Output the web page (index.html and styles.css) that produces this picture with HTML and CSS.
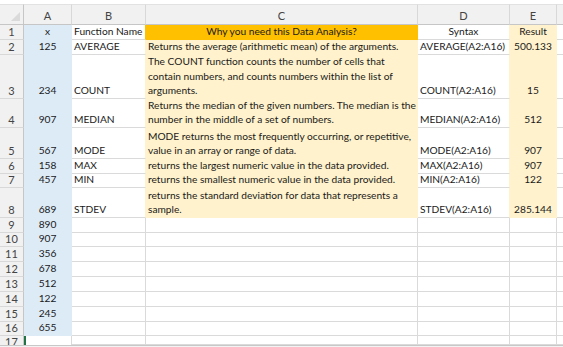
FILE: index.html
```html
<!DOCTYPE html>
<html>
<head>
<meta charset="utf-8">
<link rel="stylesheet" href="styles.css">
</head>
<body>
<div class="sheet">
  <!-- column header row -->
  <div class="ch corner"><span class="tri"></span></div>
  <div class="ch">A</div>
  <div class="ch">B</div>
  <div class="ch">C</div>
  <div class="ch">D</div>
  <div class="ch">E</div>
  <div class="ch last"></div>

  <!-- row 1 -->
  <div class="rh">1</div>
  <div class="c a ctr">x</div>
  <div class="c b nb-or">Function Name</div>
  <div class="c or ctr">Why you need this Data Analysis?</div>
  <div class="c d ctr nb-y">Syntax</div>
  <div class="c y ctr">Result</div>
  <div class="c f"></div>

  <!-- row 2 -->
  <div class="rh">2</div>
  <div class="c a ctr">125</div>
  <div class="c b nb-y">AVERAGE</div>
  <div class="c y">Returns the average (arithmetic mean) of the arguments.</div>
  <div class="c d nb-y">AVERAGE(A2:A16)</div>
  <div class="c y ctr">500.133</div>
  <div class="c f"></div>

  <!-- row 3 -->
  <div class="rh">3</div>
  <div class="c a ctr">234</div>
  <div class="c b nb-y">COUNT</div>
  <div class="c y">The COUNT function counts the number of cells that<br>contain numbers, and counts numbers within the list of<br>arguments.</div>
  <div class="c d nb-y">COUNT(A2:A16)</div>
  <div class="c y ctr">15</div>
  <div class="c f"></div>

  <!-- row 4 -->
  <div class="rh">4</div>
  <div class="c a ctr">907</div>
  <div class="c b nb-y">MEDIAN</div>
  <div class="c y">Returns the median of the given numbers. The median is the<br>number in the middle of a set of numbers.</div>
  <div class="c d nb-y">MEDIAN(A2:A16)</div>
  <div class="c y ctr">512</div>
  <div class="c f"></div>

  <!-- row 5 -->
  <div class="rh">5</div>
  <div class="c a ctr">567</div>
  <div class="c b nb-y">MODE</div>
  <div class="c y">MODE returns the most frequently occurring, or repetitive,<br>value in an array or range of data.</div>
  <div class="c d nb-y">MODE(A2:A16)</div>
  <div class="c y ctr">907</div>
  <div class="c f"></div>

  <!-- row 6 -->
  <div class="rh">6</div>
  <div class="c a ctr">158</div>
  <div class="c b nb-y">MAX</div>
  <div class="c y">returns the largest numeric value in the data provided.</div>
  <div class="c d nb-y">MAX(A2:A16)</div>
  <div class="c y ctr">907</div>
  <div class="c f"></div>

  <!-- row 7 -->
  <div class="rh">7</div>
  <div class="c a ctr">457</div>
  <div class="c b nb-y">MIN</div>
  <div class="c y">returns the smallest numeric value in the data provided.</div>
  <div class="c d nb-y">MIN(A2:A16)</div>
  <div class="c y ctr">122</div>
  <div class="c f"></div>

  <!-- row 8 -->
  <div class="rh">8</div>
  <div class="c a ctr">689</div>
  <div class="c b nb-y">STDEV</div>
  <div class="c y">returns the standard deviation for data that represents a<br>sample.</div>
  <div class="c d nb-y">STDEV(A2:A16)</div>
  <div class="c y ctr">285.144</div>
  <div class="c f"></div>

  <div class="rh">9</div><div class="c a ctr">890</div><div class="c"></div><div class="c"></div><div class="c"></div><div class="c"></div><div class="c f"></div>
  <div class="rh">10</div><div class="c a ctr">907</div><div class="c"></div><div class="c"></div><div class="c"></div><div class="c"></div><div class="c f"></div>
  <div class="rh">11</div><div class="c a ctr">356</div><div class="c"></div><div class="c"></div><div class="c"></div><div class="c"></div><div class="c f"></div>
  <div class="rh">12</div><div class="c a ctr">678</div><div class="c"></div><div class="c"></div><div class="c"></div><div class="c"></div><div class="c f"></div>
  <div class="rh">13</div><div class="c a ctr">512</div><div class="c"></div><div class="c"></div><div class="c"></div><div class="c"></div><div class="c f"></div>
  <div class="rh">14</div><div class="c a ctr">122</div><div class="c"></div><div class="c"></div><div class="c"></div><div class="c"></div><div class="c f"></div>
  <div class="rh">15</div><div class="c a ctr">245</div><div class="c"></div><div class="c"></div><div class="c"></div><div class="c"></div><div class="c f"></div>
  <div class="rh">16</div><div class="c a ctr">655</div><div class="c"></div><div class="c"></div><div class="c"></div><div class="c"></div><div class="c f"></div>
  <div class="rh r17"><span class="r17n">17</span></div><div class="c sel"></div><div class="c"></div><div class="c"></div><div class="c"></div><div class="c"></div><div class="c f"></div>
</div>
<div class="hbar"></div>
</body>
</html>
```
FILE: styles.css
```css
html, body {
  margin: 0;
  padding: 0;
  background: #ffffff;
  overflow: hidden;
}
body {
  padding-top: 4px;
  height: 343px;
  font-family: Lato, "Liberation Sans", sans-serif;
  font-size: 10.2px;
  color: #1a1a1a;
}
.sheet {
  display: grid;
  grid-template-columns: 24px 48px 74px 272px 92px 47px 6px;
  grid-template-rows: 21px 15px 15px 44px 29px 31px 15px 14px 30px 15px 14px 15px 15px 15px 15px 15px 14px 9px;
  height: 341px;
  overflow: hidden;
}
.ch {
  background: #f1f1f1;
  border-right: 1px solid #d8d8d8;
  border-bottom: 1px solid #c6c6c6;
  border-top: 1px solid #e2e2e2;
  box-sizing: border-box;
  color: #444444;
  font-size: 11px;
  display: flex;
  align-items: center;
  justify-content: center;
  padding-top: 1px;
}
.ch.corner {
  position: relative;
  border-right-color: #c6c6c6;
}
.ch.last { border-right: none; }
.tri {
  position: absolute;
  right: 3px;
  bottom: 3px;
  width: 0;
  height: 0;
  border-left: 9px solid transparent;
  border-bottom: 9px solid #dadada;
}
.rh {
  background: #f1f1f1;
  border-right: 1px solid #c6c6c6;
  border-bottom: 1px solid #d8d8d8;
  box-sizing: border-box;
  color: #444444;
  font-size: 11px;
  display: flex;
  align-items: flex-end;
  justify-content: center;
  line-height: 14px;
  overflow: hidden;
}
.c {
  box-sizing: border-box;
  border-right: 1px solid #dadada;
  border-bottom: 1px solid #dadada;
  display: flex;
  flex-direction: column;
  justify-content: flex-end;
  align-items: flex-start;
  line-height: 14.6px;
  padding: 0 2px 0 2px;
  white-space: nowrap;
  overflow: hidden;
}
.ctr { align-items: center; text-align: center; }
.a {
  background: #ddebf7;
  border-color: #ddebf7;
}
.or {
  background: #ffc000;
  border-color: #ffc000;
}
.y {
  background: #fff2cc;
  border-color: #fff2cc;
}
.nb-y { border-right-color: #fff2cc; }
.nb-or { border-right-color: #ffc000; }
.f { border-right: none; }
.sel {
  border-left: 2px solid #217346;
  border-bottom: none;
}
.r17 {
  border-bottom: none;
  align-items: flex-start;
}
.r17n { line-height: 12px; }
.hbar {
  height: 9px;
  border-top: 1px solid #c8c8c8;
  background: #f3f3f3;
}
```
